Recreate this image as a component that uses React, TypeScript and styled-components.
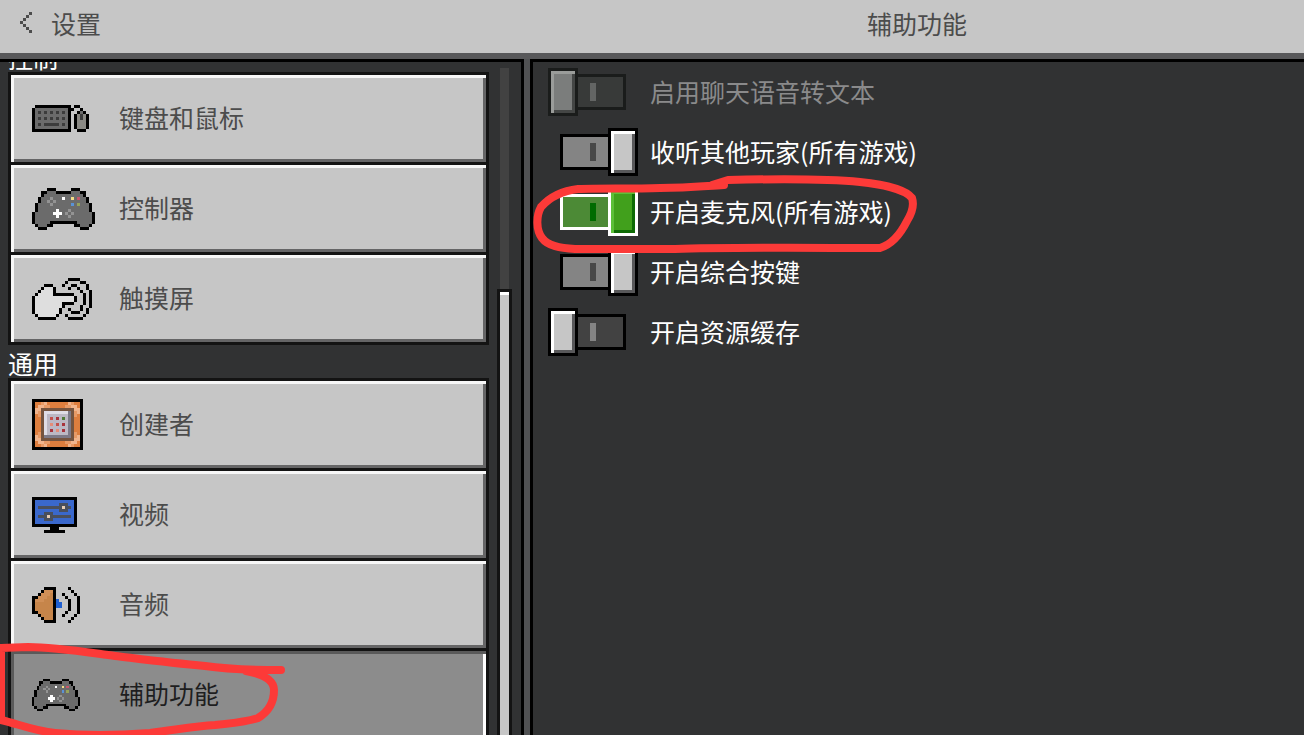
import React, { useState } from "react";
import styled, { createGlobalStyle, css } from "styled-components";

const GlobalStyle = createGlobalStyle`
  * { box-sizing: border-box; }
  body {
    margin: 0;
    background: #313233;
    font-family: "Noto Sans CJK SC", "Liberation Sans", sans-serif;
    font-size: 25px;
    line-height: 32px;
  }
  button { font: inherit; border: 0; margin: 0; cursor: pointer; }
`;

type Palette = Record<string, string>;

const palette: Palette = {
  K: "#000000",
  g: "#6b6b6b",
  d: "#3c3c3c",
  m: "#8a8984",
  L: "#939393",
  W: "#ffffff",
  Y: "#f3dc86",
  R: "#c9566b",
  B: "#5a93d8",
  O: "#96a35c",
  w: "#dedede",
};

const blockPalette: Palette = {
  K: "#000000",
  o: "#dd7e3e",
  P: "#f0b48c",
  p: "#e79a66",
  b: "#75543f",
  L: "#dfdde6",
  l: "#bcb8c4",
  s: "#7d7a88",
  r: "#c4504a",
  R: "#a8333c",
  G: "#4f7a37",
  O: "#e58c78",
};

const screenPalette: Palette = {
  K: "#000000",
  b: "#3a68cc",
  d: "#4a4f5c",
  w: "#e8cdb4",
  c: "#c6854a",
  C: "#d08f57",
  B: "#1f5fd0",
  g: "#4c4c4c",
};

const keyboard = [
  ".KKKKKKKKKKKK.KK...",
  "KgggggggggggKK..K..",
  "KgdgdgdgdgdgK..KgK.",
  "KgggggggggggK.KmdmK",
  "KgdgdgdgdgdgK.KmdmK",
  "KgggggggggggK.KmmmK",
  "KgdgdddddgdgK.KmmmK",
  "KgggggggggggK.KmmmK",
  "KKKKKKKKKKKKK..KKK.",
];

const controller = [
  ".....KKK.....KKK.....",
  "...KKgggKKKKKgggKK...",
  "...KgggggggggggggK...",
  "..KgggLgggWggYgRggK..",
  "..KggLgLggggggggggK..",
  ".KggggLggggggBgOgggK.",
  ".KgggggggggggggggggK.",
  ".KggggggWgggLggggggK.",
  "KggggggWWWgLgLggggggK",
  "KgggggggWgggLgggggggK",
  "KgggggggggggggggggggK",
  "KgggggKKKKKKKKKgggggK",
  ".KgggKK.......KKgggK.",
  "..KKK...........KKK..",
];

const touch = [
  "............KKKK....",
  "...........K....KK..",
  "....KKK...K..KK...K.",
  "...KwwwK....K..K..K.",
  "..KwwwwK........K..K",
  ".KwwwwwKKKKKKK...K.K",
  "KwwwwwwwwwwwwwK..K.K",
  "KwwwwwwwwwwwwwK..K.K",
  "KwwwwwwwwwKKKK...K.K",
  "KwwwwwwwwwK.....K..K",
  "KwwwwwwwwK..K...K.K.",
  "KwwwwwwwwK...KKK..K.",
  ".KwwwwwwK..K.....K..",
  "..KKKKKK....KKKKK...",
];

const commandBlock = [
  "KKKKKKKKKKKKKKKKK",
  "KoopPoooooooPpooK",
  "KoPPppoooooppPPoK",
  "KPPbbbbbbbbbbbPPK",
  "KPpbLLLLLLLLsbpPK",
  "KopbLlllllllsbpoK",
  "KoobLlrlRlGlsbooK",
  "KoobLlllllllsbooK",
  "KoobLlOlrlRlsbooK",
  "KoobLlllllllsbooK",
  "KoobLlRlOlRlsbooK",
  "KopbLlllllllsbpoK",
  "KPpbsssssssssbpPK",
  "KPPbbbbbbbbbbbPPK",
  "KoPPppoooooppPPoK",
  "KoopPoooooooPpooK",
  "KKKKKKKKKKKKKKKKK",
];

const monitor = [
  "KKKKKKKKKKKKKKK",
  "KbbbbbbbbbbbbbK",
  "KbbbbbbbbdddbbK",
  "KbddddddddwddbK",
  "KbbbbbbbbdddbbK",
  "KbbbdddbbbbbbbK",
  "KbdddwdddddddbK",
  "KbbbdddbbbbbbbK",
  "KbbbbbbbbbbbbbK",
  "KKKKKKKKKKKKKKK",
  "......KKK......",
  "....KKKKKKK....",
];

const speaker = [
  "....KKKK....K...",
  "...KCCCK.....K..",
  "..KCCCcK..K...K.",
  "KKCCCccK...K...K",
  "KCCCcccKB...K..K",
  "KccccccKBB..K..K",
  "KccccccKBB..K..K",
  "KccccccK....K..K",
  "KKcccccK...K...K",
  "..KccccK..K...K.",
  "...KcccK.....K..",
  "....KKKK....K...",
];

const chevron = ["...g", "..g.", ".g..", "g...", ".g..", "..g.", "...g"];

interface PixelProps {
  rows: string[];
  colors?: Palette;
  width?: number;
  height?: number;
}

function PixelIcon({ rows, colors = palette, width, height }: PixelProps) {
  const cols = rows[0].length;
  const cells: React.ReactNode[] = [];
  rows.forEach((row, y) => {
    let x = 0;
    while (x < row.length) {
      const key = row[x];
      let end = x + 1;
      while (end < row.length && row[end] === key) end += 1;
      if (key !== ".") {
        cells.push(
          <rect key={`${x}-${y}`} x={x} y={y} width={end - x} height={1} fill={colors[key]} />
        );
      }
      x = end;
    }
  });
  return (
    <svg
      width={width ?? cols * 3}
      height={height ?? rows.length * 3}
      viewBox={`0 0 ${cols} ${rows.length}`}
      preserveAspectRatio="none"
      shapeRendering="crispEdges"
      aria-hidden="true"
    >
      {cells}
    </svg>
  );
}

const columns = "minmax(0, 524fr) minmax(0, 774fr)";

const Screen = styled.div`
  position: relative;
  display: flex;
  flex-direction: column;
  height: 100vh;
  overflow: hidden;
`;

const Header = styled.header`
  display: grid;
  grid-template-columns: ${columns};
  column-gap: 6px;
  align-items: center;
  flex: none;
  height: 59px;
  padding-bottom: 8px;
  background: #c6c6c6;
  border-bottom: 6px solid #58585a;
  color: #4c4c4c;
`;

const BackButton = styled.button`
  display: flex;
  align-items: center;
  justify-self: start;
  gap: 19px;
  padding: 0 20px;
  background: none;
  color: inherit;
`;

const Title = styled.h1`
  margin: 0;
  font-size: 25px;
  font-weight: 400;
  text-align: center;
`;

const Body = styled.div`
  display: grid;
  grid-template-columns: ${columns};
  column-gap: 6px;
  flex: 1;
  min-height: 0;
  background: #505153;
`;

const Sidebar = styled.aside`
  display: flex;
  min-height: 0;
  padding: 0 9px 0 8px;
  overflow: hidden;
  background: #313233;
  border-top: 3px solid #000;
  border-right: 3px solid #000;
`;

const Sections = styled.nav`
  flex: 1;
  min-width: 0;
  margin-top: -23px;
`;

const SectionTitle = styled.h2`
  height: 33px;
  margin: 0;
  padding-top: 2px;
  color: #fff;
  font-size: 25px;
  line-height: 32px;
  font-weight: 400;
`;

const List = styled.div`
  display: flex;
  flex-direction: column;
  gap: 3px;
  padding: 3px;
  background: #131313;
`;

const NavButton = styled.button<{ $active?: boolean }>`
  display: grid;
  grid-template-columns: 87px 1fr;
  align-items: center;
  height: 87px;
  padding: 0 21px;
  text-align: left;
  ${({ $active }) =>
    $active
      ? css`
          color: #1e1e1f;
          background: #8c8c8c;
          box-shadow: inset 3px 3px #5a5a5a, inset -3px -3px #fff;
        `
      : css`
          color: #4c4c4c;
          background: #c6c6c6;
          box-shadow: inset 3px 3px #f7f7f7, inset -3px -3px #656566;
        `}
`;

const Label = styled.span`
  padding-bottom: 3px;
`;

const Scrollbar = styled.div`
  display: flex;
  flex-direction: column;
  width: 15px;
  margin: 6px 0 0 8px;
`;

const Track = styled.div`
  flex: 222 0 0;
  margin: 0 3px;
  background: #424242;
`;

const Thumb = styled.div`
  flex: 445 0 0;
  background: #c6c6c6;
  border: 3px solid #131313;
  border-bottom: 0;
  box-shadow: inset 0 3px #fff;
`;

const Panel = styled.main`
  min-width: 0;
  padding: 0 15px;
  background: #313233;
  border-top: 3px solid #000;
  border-left: 3px solid #000;
`;

const Option = styled.label<{ $disabled?: boolean }>`
  display: flex;
  align-items: center;
  gap: 12px;
  height: 60px;
  color: ${({ $disabled }) => ($disabled ? "#8a8a8b" : "#fff")};
`;

type Tone = "normal" | "focus" | "disabled";

const tones = {
  normal: { edge: "#000", light: "#fff", face: "#c6c6c6", dark: "#58585a" },
  focus: { edge: "#fff", light: "#5cc038", face: "#41a01c", dark: "#0e6b05" },
  disabled: { edge: "#1a1c1b", light: "#9a9c9a", face: "#7b7d7c", dark: "#444645" },
};

const Switch = styled.span<{ $on: boolean }>`
  position: relative;
  display: flex;
  flex-direction: ${({ $on }) => ($on ? "row-reverse" : "row")};
  align-items: center;
  flex: none;
  width: 90px;
`;

const SwitchInput = styled.input`
  position: absolute;
  inset: 0;
  width: 100%;
  height: 100%;
  margin: 0;
  opacity: 0;
  z-index: 1;
`;

const Knob = styled.span<{ $tone: Tone }>`
  z-index: 1;
  width: 30px;
  height: 48px;
  background: ${({ $tone }) => tones[$tone].face};
  border: 3px solid ${({ $tone }) => tones[$tone].edge};
  box-shadow: inset 3px 3px ${({ $tone }) => tones[$tone].light},
    inset -3px -3px ${({ $tone }) => tones[$tone].dark};
`;

const Groove = styled.span<{ $tone: Tone; $on: boolean }>`
  display: flex;
  flex-direction: inherit;
  align-items: center;
  width: 51px;
  height: 36px;
  padding: 0 12px;
  margin: ${({ $on }) => ($on ? "0 -3px 0 0" : "0 0 0 -3px")};
  border: 3px solid ${({ $tone }) => tones[$tone].edge};
  background: ${({ $tone, $on }) =>
    $tone === "focus" ? "#4c8a36" : $tone === "disabled" ? "#383a39" : $on ? "#848484" : "#424242"};
`;

const Mark = styled.span<{ $tone: Tone; $on: boolean }>`
  width: 6px;
  height: 18px;
  background: ${({ $tone, $on }) =>
    $tone === "focus" ? "#006b00" : $tone === "disabled" ? "#636564" : $on ? "#484848" : "#848484"};
`;

const Annotation = styled.svg`
  position: absolute;
  top: 0;
  left: 0;
  z-index: 2;
  pointer-events: none;
`;

interface ToggleProps {
  label: string;
  initial?: boolean;
  tone?: Tone;
}

function Toggle({ label, initial = false, tone = "normal" }: ToggleProps) {
  const [on, setOn] = useState(initial);
  const disabled = tone === "disabled";
  return (
    <Option $disabled={disabled}>
      <Switch $on={on}>
        <SwitchInput
          type="checkbox"
          checked={on}
          disabled={disabled}
          onChange={(event) => setOn(event.target.checked)}
        />
        <Knob $tone={tone} />
        <Groove $tone={tone} $on={on}>
          <Mark $tone={tone} $on={on} />
        </Groove>
      </Switch>
      <Label>{label}</Label>
    </Option>
  );
}

export default function App() {
  const [page, setPage] = useState("辅助功能");

  const item = (label: string, icon: React.ReactNode) => (
    <NavButton
      type="button"
      $active={page === label}
      aria-current={page === label ? "page" : undefined}
      onClick={() => setPage(label)}
    >
      {icon}
      <Label>{label}</Label>
    </NavButton>
  );

  return (
    <>
      <GlobalStyle />
      <Screen>
        <Header>
          <BackButton type="button">
            <PixelIcon rows={chevron} colors={screenPalette} />
            设置
          </BackButton>
          <Title>{page}</Title>
        </Header>
        <Body>
          <Sidebar>
            <Sections>
              <SectionTitle>控制</SectionTitle>
              <List>
                {item("键盘和鼠标", <PixelIcon rows={keyboard} />)}
                {item("控制器", <PixelIcon rows={controller} />)}
                {item("触摸屏", <PixelIcon rows={touch} />)}
              </List>
              <SectionTitle>通用</SectionTitle>
              <List>
                {item("创建者", <PixelIcon rows={commandBlock} colors={blockPalette} />)}
                {item("视频", <PixelIcon rows={monitor} colors={screenPalette} />)}
                {item("音频", <PixelIcon rows={speaker} colors={screenPalette} />)}
                {item("辅助功能", <PixelIcon rows={controller} width={48} height={32} />)}
              </List>
            </Sections>
            <Scrollbar>
              <Track />
              <Thumb />
            </Scrollbar>
          </Sidebar>
          <Panel>
            <Toggle label="启用聊天语音转文本" tone="disabled" />
            <Toggle label="收听其他玩家(所有游戏)" initial />
            <Toggle label="开启麦克风(所有游戏)" initial tone="focus" />
            <Toggle label="开启综合按键" initial />
            <Toggle label="开启资源缓存" />
          </Panel>
        </Body>
        <Annotation
          width="940"
          height="735"
          viewBox="0 0 940 735"
          fill="none"
          stroke="#fc3a38"
          strokeWidth="8"
          strokeLinecap="round"
          strokeLinejoin="round"
          aria-hidden="true"
        >
          <path d="M281 670 C250 670 225 669 205 666 C170 663 140 659 115 656 C85 652 55 647 28 647 L1 648 L1 720 C18 724 35 731 55 733 C85 736 125 735 150 733 C175 730 195 726 215 725 C235 723 250 721 258 718 C268 712 274 702 274 690 C274 680 262 674 246 671" />
          <path d="M724 185 C705 186 690 188 660 188 C630 189 600 188 578 189 C560 191 549 198 541 207 C536 216 536 230 542 238 C548 246 560 248 575 249 L675 249 C730 247 820 248 880 248 C893 244 902 231 907 221 C912 213 914 204 912 198 C905 189 880 184 860 182 C820 178 770 179 728 180 L712 185" />
        </Annotation>
      </Screen>
    </>
  );
}
